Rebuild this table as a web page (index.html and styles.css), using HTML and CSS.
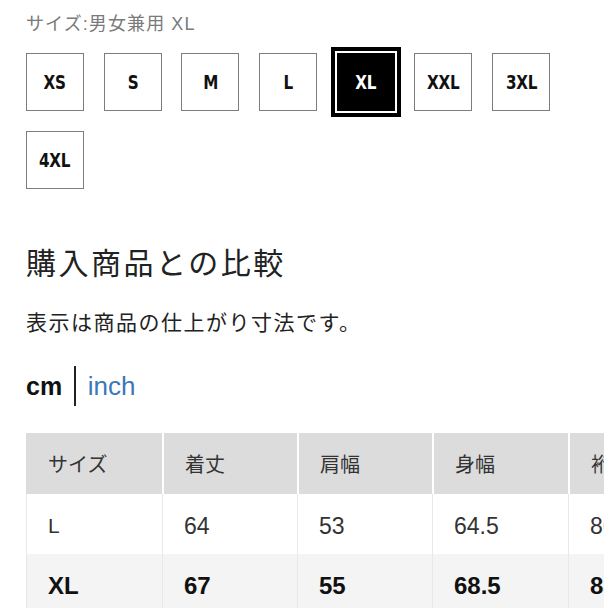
FILE: index.html
```html
<!DOCTYPE html>
<html lang="ja">
<head>
<meta charset="utf-8">
<link rel="stylesheet" href="styles.css">
</head>
<body>
<div class="page">
  <div class="size-label">サイズ:男女兼用 XL</div>
  <div class="sizes">
    <div class="size"><span class="size-text">XS</span></div>
    <div class="size"><span class="size-text">S</span></div>
    <div class="size"><span class="size-text">M</span></div>
    <div class="size"><span class="size-text">L</span></div>
    <div class="size selected"><span class="size-text">XL</span></div>
    <div class="size"><span class="size-text">XXL</span></div>
    <div class="size"><span class="size-text">3XL</span></div>
    <div class="size"><span class="size-text">4XL</span></div>
  </div>
  <h2 class="heading">購入商品との比較</h2>
  <p class="note">表示は商品の仕上がり寸法です。</p>
  <div class="units">
    <span class="unit-cm">cm</span>
    <span class="unit-sep"></span>
    <span class="unit-inch">inch</span>
  </div>
  <div class="table-wrap">
    <div class="grid">
      <div class="cell head">サイズ</div>
      <div class="cell head">着丈</div>
      <div class="cell head">肩幅</div>
      <div class="cell head">身幅</div>
      <div class="cell head">裄丈</div>

      <div class="cell row-l size-cell">L</div>
      <div class="cell row-l">64</div>
      <div class="cell row-l">53</div>
      <div class="cell row-l">64.5</div>
      <div class="cell row-l">86</div>

      <div class="cell row-xl">XL</div>
      <div class="cell row-xl">67</div>
      <div class="cell row-xl">55</div>
      <div class="cell row-xl">68.5</div>
      <div class="cell row-xl">88</div>
    </div>
  </div>
</div>
</body>
</html>
```

FILE: styles.css
```css
html, body {
  margin: 0;
  padding: 0;
  background: #fff;
  overflow: hidden;
}

.page {
  padding: 12px 0 0 26px;
  font-family: "Liberation Sans", "Noto Sans CJK JP", sans-serif;
  color: #222;
}

.size-label {
  font-size: 18px;
  line-height: 24px;
  color: #7a7a7a;
  letter-spacing: 1.1px;
}

.sizes {
  display: flex;
  flex-wrap: wrap;
  column-gap: 19.7px;
  row-gap: 20px;
  margin-top: 17px;
  width: 560px;
}

.size {
  box-sizing: border-box;
  width: 58px;
  height: 58px;
  border: 1.5px solid #7d7d7d;
  display: flex;
  align-items: center;
  justify-content: center;
  color: #111;
}

.size-text {
  display: inline-block;
  font-family: "DejaVu Sans", sans-serif;
  font-weight: bold;
  font-size: 20px;
  line-height: 20px;
  transform: scaleX(0.76);
  letter-spacing: -0.3px;
}

.size.selected {
  background: #000;
  color: #fff;
  border-color: #000;
  box-shadow: 0 0 0 2px #fff, 0 0 0 6px #000;
}

.heading {
  margin: 55px 0 0;
  font-weight: normal;
  font-size: 30px;
  line-height: 40px;
  letter-spacing: 2.5px;
  color: #222;
}

.note {
  margin: 24px 0 0;
  font-size: 21px;
  line-height: 30px;
  letter-spacing: 1.5px;
  color: #222;
}

.units {
  display: flex;
  align-items: center;
  height: 40px;
  margin-top: 28px;
}

.unit-cm {
  font-weight: bold;
  font-size: 25px;
  color: #111;
}

.unit-sep {
  width: 1.5px;
  height: 40px;
  background: #222;
  margin: 0 12px 0 12px;
}

.unit-inch {
  font-size: 26px;
  color: #3a78b8;
}

.table-wrap {
  margin-top: 27px;
  width: 578px;
  overflow: hidden;
}

.grid {
  display: grid;
  grid-template-columns: 136px 135px 135px 136px 135px;
  grid-template-rows: 61px 60px 60px;
  width: 677px;
}

.cell {
  box-sizing: border-box;
  display: flex;
  align-items: center;
  padding: 4px 0 0 21px;
  font-size: 23px;
  color: #333;
}

.head {
  background: #dcdcdc;
  font-size: 20px;
  padding-top: 0;
  border-left: 2px solid #fff;
}

.head:first-child {
  border-left: none;
  padding-left: 22px;
}

.row-l {
  background: #fff;
  border-left: 1px solid #e8e8e8;
}

.size-cell {
  font-size: 21px;
}

.row-xl {
  background: #f4f4f4;
  border-left: 1px solid #e8e8e8;
  font-weight: bold;
  font-size: 24px;
  color: #111;
}
```
